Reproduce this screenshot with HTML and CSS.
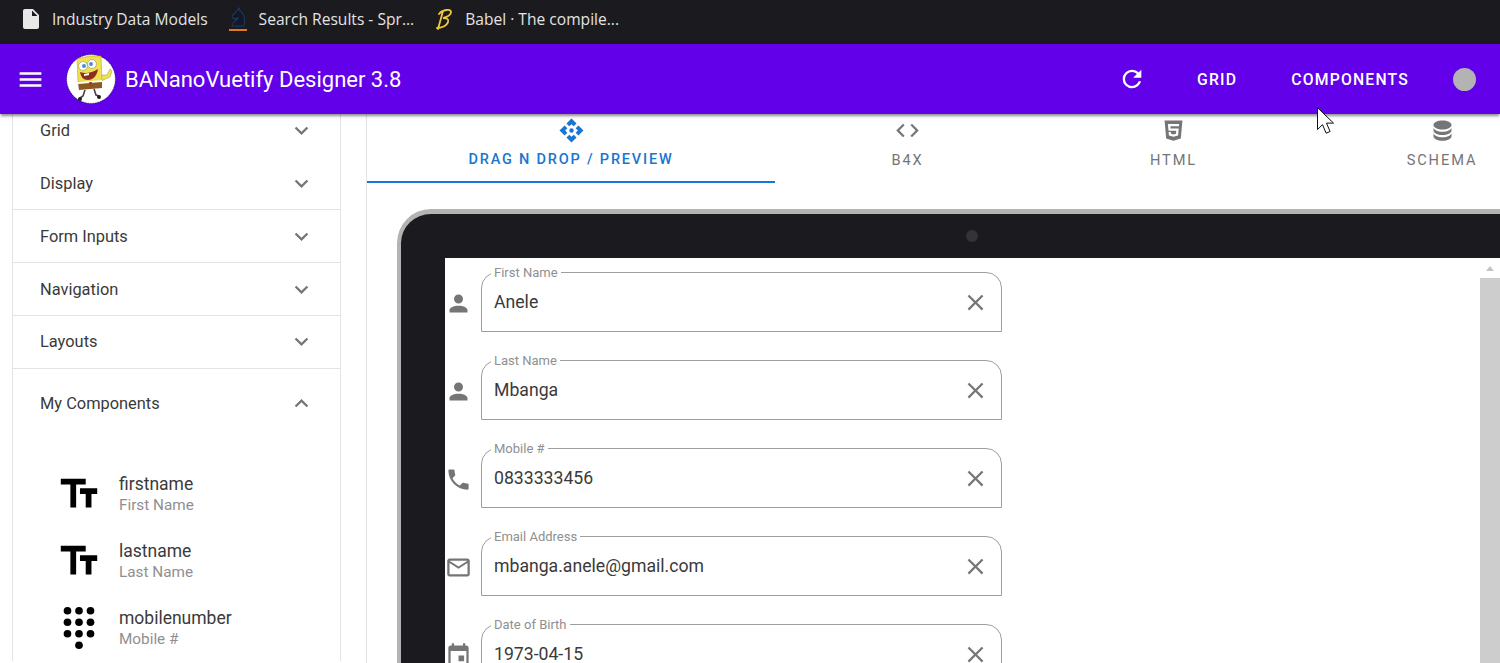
FILE: index.html
```html
<!DOCTYPE html>
<html lang="en">
<head>
<meta charset="utf-8">
<title>BANanoVuetify Designer 3.8</title>
<link rel="stylesheet" href="styles.css">
</head>
<body>
<nav class="bookmarks">
  <a class="bookmark bm-first"><svg class="bm-icon file-icon" viewBox="0 0 24 24"><path d="M13,9V3.5L18.5,9M6,2C4.89,2 4,2.89 4,4V20A2,2 0 0,0 6,22H18A2,2 0 0,0 20,20V8L14,2H6Z"/></svg>Industry Data Models</a>
  <a class="bookmark"><svg class="bm-icon" viewBox="0 0 24 24"><path d="M6 19c0-4 5-5 6-8-2 1-4 1-5 0l-1-2 5-5 2-3 1 3c4 2 5 8 4 15z" fill="#10182a" stroke="#1d3a5e" stroke-width="1.1"/><path d="M3 23h18" stroke="#e07a1a" stroke-width="2"/></svg>Search Results - Spr...</a>
  <a class="bookmark"><svg class="bm-icon" viewBox="0 0 24 24"><path d="M7 7c3-4 12-6 12-2 0 3-4 5-8 6 4 0 6 1 5 4-1 4-7 6-11 6M11 4L6 22" fill="none" stroke="#f0c93a" stroke-width="1.8" stroke-linecap="round"/></svg>Babel · The compile...</a>
</nav>

<header class="appbar">
  <svg class="menu-icon" viewBox="0 0 24 24"><path d="M3,6H21V8H3V6M3,11H21V13H3V11M3,16H21V18H3V16Z"/></svg>
  <svg class="logo" viewBox="0 0 50 50">
    <circle cx="25" cy="25" r="24.4" fill="#fff" stroke="#222" stroke-width="0.6" stroke-dasharray="1.5 1"/>
    <path d="M35 21l6 0 3-6 2 2-2 6-9 4z" fill="#f2e24e" stroke="#8a7a20" stroke-width=".4"/>
    <path d="M11 5l12-3 12 0 1 25-24 1z" fill="#f0e050" stroke="#a89a30" stroke-width=".5"/>
    <path d="M12 29l24-2 0 7-23 2z" fill="#8a5a20"/>
    <path d="M12 28l24-2 0 2-24 2z" fill="#fff"/>
    <path d="M23 28l3 0-1 5z" fill="#c0282a"/>
    <circle cx="17" cy="12" r="4.4" fill="#fff" stroke="#666" stroke-width=".4"/>
    <circle cx="26" cy="10" r="4.4" fill="#fff" stroke="#666" stroke-width=".4"/>
    <circle cx="18" cy="12" r="2" fill="#4a90d0"/>
    <circle cx="25" cy="10" r="2" fill="#4a90d0"/>
    <path d="M14 18c5 2 12 1 18-3-1 7-5 11-10 11-5 0-7-3-8-8z" fill="#8a2f22"/>
    <path d="M18 20l5-1 0 2-5 1z" fill="#fff"/>
    <path d="M19 36l-2 6-3 2M28 35l2 6 3 1" fill="none" stroke="#444" stroke-width="1.6"/>
    <circle cx="14" cy="45" r="2" fill="#222"/><circle cx="33" cy="43" r="2" fill="#222"/>
  </svg>
  <h1 class="title">BANanoVuetify Designer 3.8</h1>
  <div class="spacer"></div>
  <svg class="refresh-icon" viewBox="0 0 24 24"><path d="M17.65,6.35C16.2,4.9 14.21,4 12,4A8,8 0 0,0 4,12A8,8 0 0,0 12,20C15.73,20 18.84,17.45 19.73,14H17.65C16.83,16.33 14.61,18 12,18A6,6 0 0,1 6,12A6,6 0 0,1 12,6C13.66,6 15.14,6.69 16.22,7.78L13,11H20V4L17.65,6.35Z"/></svg>
  <a class="bar-btn btn-grid">GRID</a>
  <a class="bar-btn btn-comp">COMPONENTS</a>
  <span class="user-dot"></span>
</header>

<main class="main">
  <aside class="side">
    <div class="panel">
      <div class="acc-row acc-first"><span>Grid</span><svg class="chev" viewBox="0 0 24 24"><path d="M7.41,8.58L12,13.17L16.59,8.58L18,10L12,16L6,10L7.41,8.58Z"/></svg></div>
      <div class="acc-row acc-plain"><span>Display</span><svg class="chev" viewBox="0 0 24 24"><path d="M7.41,8.58L12,13.17L16.59,8.58L18,10L12,16L6,10L7.41,8.58Z"/></svg></div>
      <div class="acc-row"><span>Form Inputs</span><svg class="chev" viewBox="0 0 24 24"><path d="M7.41,8.58L12,13.17L16.59,8.58L18,10L12,16L6,10L7.41,8.58Z"/></svg></div>
      <div class="acc-row"><span>Navigation</span><svg class="chev" viewBox="0 0 24 24"><path d="M7.41,8.58L12,13.17L16.59,8.58L18,10L12,16L6,10L7.41,8.58Z"/></svg></div>
      <div class="acc-row"><span>Layouts</span><svg class="chev" viewBox="0 0 24 24"><path d="M7.41,8.58L12,13.17L16.59,8.58L18,10L12,16L6,10L7.41,8.58Z"/></svg></div>
      <div class="acc-row acc-open"><span>My Components</span><svg class="chev" viewBox="0 0 24 24"><path d="M7.41,15.41L12,10.83L16.59,15.41L18,14L12,8L6,14L7.41,15.41Z"/></svg></div>
      <ul class="comp-list">
        <li class="comp-item"><svg class="comp-icon" viewBox="0 0 24 24"><path d="M2.5 4v3h5v12h3V7h5V4h-13zm19 5h-9v3h3v7h3v-7h3V9z"/></svg><div><div class="comp-name">firstname</div><div class="comp-sub">First Name</div></div></li>
        <li class="comp-item"><svg class="comp-icon" viewBox="0 0 24 24"><path d="M2.5 4v3h5v12h3V7h5V4h-13zm19 5h-9v3h3v7h3v-7h3V9z"/></svg><div><div class="comp-name">lastname</div><div class="comp-sub">Last Name</div></div></li>
        <li class="comp-item"><svg class="comp-icon" viewBox="0 0 24 24"><circle cx="6" cy="3" r="2"/><circle cx="12" cy="3" r="2"/><circle cx="18" cy="3" r="2"/><circle cx="6" cy="9" r="2"/><circle cx="12" cy="9" r="2"/><circle cx="18" cy="9" r="2"/><circle cx="6" cy="15" r="2"/><circle cx="12" cy="15" r="2"/><circle cx="18" cy="15" r="2"/><circle cx="12" cy="21" r="2"/></svg><div><div class="comp-name">mobilenumber</div><div class="comp-sub">Mobile #</div></div></li>
      </ul>
    </div>
  </aside>

  <section class="content">
    <div class="tabs">
      <div class="tab tab-active tab-a"><svg class="tab-icon" viewBox="0 0 24 24"><path d="M22.67,12L18.18,16.5L15.67,14L17.65,12L15.67,10.04L18.18,7.53L22.67,12M12,1.33L16.47,5.82L13.96,8.33L12,6.35L10,8.33L7.5,5.82L12,1.33M12,22.67L7.53,18.18L10.04,15.67L12,17.65L14,15.67L16.5,18.18L12,22.67M1.33,12L5.82,7.5L8.33,10L6.35,12L8.33,13.96L5.82,16.47L1.33,12M12,10A2,2 0 0,1 14,12A2,2 0 0,1 12,14A2,2 0 0,1 10,12A2,2 0 0,1 12,10Z"/></svg><span>DRAG N DROP / PREVIEW</span></div>
      <div class="tab tab-b"><svg class="tab-icon" viewBox="0 0 24 24"><path d="M14.6,16.6L19.2,12L14.6,7.4L16,6L22,12L16,18L14.6,16.6M9.4,16.6L4.8,12L9.4,7.4L8,6L2,12L8,18L9.4,16.6Z"/></svg><span>B4X</span></div>
      <div class="tab tab-c"><svg class="tab-icon" viewBox="0 0 24 24"><path d="M12,17.56L16.07,16.43L16.62,10.33H9.38L9.2,8.3H16.8L17,6.31H7L7.56,12.32H14.45L14.22,14.9L12,15.5L9.78,14.9L9.64,13.24H7.64L7.93,16.43L12,17.56M4.07,3H19.93L18.5,19.2L12,21L5.5,19.2L4.07,3Z"/></svg><span>HTML</span></div>
      <div class="tab tab-d"><svg class="tab-icon" viewBox="0 0 24 24"><path d="M12,3C7.58,3 4,4.79 4,7C4,9.21 7.58,11 12,11C16.42,11 20,9.21 20,7C20,4.79 16.42,3 12,3M4,9V12C4,14.21 7.58,16 12,16C16.42,16 20,14.21 20,12V9C20,11.21 16.42,13 12,13C7.58,13 4,11.21 4,9M4,14V17C4,19.21 7.58,21 12,21C16.42,21 20,19.21 20,17V14C20,16.21 16.42,18 12,18C7.58,18 4,16.21 4,14Z"/></svg><span>SCHEMA</span></div>
    </div>

    <div class="device">
      <div class="bezel-top"><span class="camera"></span></div>
      <div class="screen">
        <form class="form">
          <div class="row"><svg class="row-icon" viewBox="0 0 24 24"><path d="M12,4A4,4 0 0,1 16,8A4,4 0 0,1 12,12A4,4 0 0,1 8,8A4,4 0 0,1 12,4M12,14C16.42,14 20,15.79 20,18V20H4V18C4,15.79 7.58,14 12,14Z"/></svg>
            <fieldset class="field"><legend>First Name</legend><span class="value">Anele</span><svg class="clear" viewBox="0 0 24 24"><path d="M19,6.41L17.59,5L12,10.59L6.41,5L5,6.41L10.59,12L5,17.59L6.41,19L12,13.41L17.59,19L19,17.59L13.41,12L19,6.41Z"/></svg></fieldset></div>
          <div class="row"><svg class="row-icon" viewBox="0 0 24 24"><path d="M12,4A4,4 0 0,1 16,8A4,4 0 0,1 12,12A4,4 0 0,1 8,8A4,4 0 0,1 12,4M12,14C16.42,14 20,15.79 20,18V20H4V18C4,15.79 7.58,14 12,14Z"/></svg>
            <fieldset class="field"><legend>Last Name</legend><span class="value">Mbanga</span><svg class="clear" viewBox="0 0 24 24"><path d="M19,6.41L17.59,5L12,10.59L6.41,5L5,6.41L10.59,12L5,17.59L6.41,19L12,13.41L17.59,19L19,17.59L13.41,12L19,6.41Z"/></svg></fieldset></div>
          <div class="row"><svg class="row-icon" viewBox="0 0 24 24"><path d="M6.62,10.79C8.06,13.62 10.38,15.94 13.21,17.38L15.41,15.18C15.69,14.9 16.08,14.82 16.43,14.93C17.55,15.3 18.75,15.5 20,15.5A1,1 0 0,1 21,16.5V20A1,1 0 0,1 20,21A17,17 0 0,1 3,4A1,1 0 0,1 4,3H7.5A1,1 0 0,1 8.5,4C8.5,5.25 8.7,6.45 9.07,7.57C9.18,7.92 9.1,8.31 8.82,8.59L6.62,10.79Z"/></svg>
            <fieldset class="field"><legend>Mobile #</legend><span class="value">0833333456</span><svg class="clear" viewBox="0 0 24 24"><path d="M19,6.41L17.59,5L12,10.59L6.41,5L5,6.41L10.59,12L5,17.59L6.41,19L12,13.41L17.59,19L19,17.59L13.41,12L19,6.41Z"/></svg></fieldset></div>
          <div class="row"><svg class="row-icon" viewBox="0 0 24 24"><path d="M22 6C22 4.9 21.1 4 20 4H4C2.9 4 2 4.9 2 6V18C2 19.1 2.9 20 4 20H20C21.1 20 22 19.1 22 18V6M20 6L12 11L4 6H20M20 18H4V8L12 13L20 8V18Z"/></svg>
            <fieldset class="field"><legend>Email Address</legend><span class="value">mbanga.anele@gmail.com</span><svg class="clear" viewBox="0 0 24 24"><path d="M19,6.41L17.59,5L12,10.59L6.41,5L5,6.41L10.59,12L5,17.59L6.41,19L12,13.41L17.59,19L19,17.59L13.41,12L19,6.41Z"/></svg></fieldset></div>
          <div class="row"><svg class="row-icon" viewBox="0 0 24 24"><path d="M19,19H5V8H19M16,1V3H8V1H6V3H5C3.89,3 3,3.89 3,5V19A2,2 0 0,0 5,21H19A2,2 0 0,0 21,19V5C21,3.89 20.1,3 19,3H18V1M17,12H12V17H17V12Z"/></svg>
            <fieldset class="field"><legend>Date of Birth</legend><span class="value">1973-04-15</span><svg class="clear" viewBox="0 0 24 24"><path d="M19,6.41L17.59,5L12,10.59L6.41,5L5,6.41L10.59,12L5,17.59L6.41,19L12,13.41L17.59,19L19,17.59L13.41,12L19,6.41Z"/></svg></fieldset></div>
        </form>
        <div class="scrollbar"><span class="scroll-up"></span><span class="scroll-thumb"></span></div>
      </div>
    </div>
  </section>
</main>

<svg class="cursor" viewBox="0 0 17 27"><path d="M.5.7V22.6l5-5 3.6 8.6 4-1.7-3.6-8.4h7z" fill="#fff" stroke="#111" stroke-width="1"/></svg>
</body>
</html>
```
FILE: styles.css
```css
* { box-sizing: border-box; }
html, body { margin: 0; height: 663px; overflow: hidden; }
body { font-family: Roboto, "Liberation Sans", sans-serif; background: #fff; color: #2b2b2b; display: flex; flex-direction: column; }
svg { display: block; flex: none; fill: currentColor; }

.bookmarks { height: 44px; flex: none; background: #1a1a1f; display: flex; align-items: center; padding: 0 0 6px 19px; color: #e3e3e3; font-family: "Open Sans", sans-serif; font-size: 15.6px; }
.bookmark { display: flex; align-items: center; margin-right: 18px; white-space: nowrap; }
.bm-icon { width: 24px; height: 24px; margin-right: 9px; }
.file-icon { color: #e8e8e8; }

.appbar { height: 70px; flex: none; background: #6200ea; color: #fff; display: flex; align-items: center; padding-left: 16px; box-shadow: 0 3px 2px -1px rgba(0,0,0,.3), 0 2px 4px rgba(0,0,0,.18); position: relative; z-index: 2; }
.menu-icon { width: 29px; height: 29px; }
.logo { width: 50px; height: 50px; margin-left: 21px; }
.title { margin: 0 0 0 9px; font-size: 22px; font-weight: 400; white-space: nowrap; }
.spacer { flex: 1; }
.refresh-icon { width: 28px; height: 28px; }
.bar-btn { font-size: 15.75px; font-weight: 500; letter-spacing: 1.2px; }
.btn-grid { margin-left: 51px; }
.btn-comp { margin-left: 54px; }
.user-dot { width: 23px; height: 23px; border-radius: 50%; background: #b3b3b3; margin: 0 24px 0 44px; }

.main { flex: 1; min-height: 0; display: flex; overflow: hidden; }
.side { width: 366px; flex: none; padding-left: 12px; }
.panel { width: 329px; margin-top: -10px; border: 1px solid #e3e3e3; border-width: 0 1px; }
.acc-row { height: 53px; display: flex; align-items: center; justify-content: space-between; padding: 0 27px; border-top: 1px solid #e3e3e3; font-size: 16.4px; color: #3a3a3a; }
.acc-first { border-top: 0; }
.acc-plain { border-top: 0; height: 52px; padding-top: 1px; }
.acc-row:nth-child(5) { padding-bottom: 2px; }
.acc-open { height: 68px; padding-top: 1px; }
.chev { width: 27px; height: 27px; margin-right: -2px; color: #757575; }
.comp-list { list-style: none; margin: 0; padding: 24px 0 0; }
.comp-item { height: 67px; display: flex; align-items: center; padding-left: 43px; }
.comp-icon { width: 46px; height: 46px; color: #000; margin-right: 17px; }
.comp-name { font-size: 17.5px; line-height: 22px; color: #3a3a3a; }
.comp-sub { font-size: 15.3px; line-height: 20px; color: #8f8f8f; }

.content { flex: 1; min-width: 0; border-left: 1px solid #e3e3e3; overflow: hidden; }
.tabs { display: flex; height: 69px; }
.tab { flex: none; display: flex; flex-direction: column; align-items: center; padding-top: 3px; font-size: 14.6px; font-weight: 400; letter-spacing: 1.9px; color: #757575; }
.tab span { margin-top: 6px; line-height: 20px; white-space: nowrap; }
.tab-icon { width: 27px; height: 27px; }
.tab-a { width: 408px; }
.tab-b { width: 265px; }
.tab-c { width: 267px; }
.tab-d { width: 270px; }
.tab-active { color: #1976d2; font-size: 14.5px; font-weight: 500; letter-spacing: 1.8px; border-bottom: 2px solid #1976d2; }

.device { width: 1151px; margin: 26px 0 0 30px; background: #1a1a1f; border: solid #b3b3b3; border-width: 5px 4px; border-radius: 34px; padding: 0 44px; }
.bezel-top { height: 44px; display: flex; align-items: center; justify-content: center; }
.camera { width: 12px; height: 12px; border-radius: 50%; background: #33333a; margin-right: 1px; }
.screen { background: #fff; display: flex; height: 500px; }
.form { flex: 1; padding-top: 8px; }
.row { display: flex; margin-bottom: 22px; height: 66px; }
.row-icon { width: 27px; height: 27px; color: #757575; margin-top: 24px; }
.field { width: 521px; height: 66px; margin: 0 0 0 9px; padding: 0 12px 6px 12px; border: 1px solid #9e9e9e; border-radius: 16px 16px 0 0; display: flex; align-items: center; justify-content: space-between; min-width: 0; }
.field legend { font-size: 13px; line-height: 13px; padding: 0 3px; margin-left: -3px; color: #8f8f8f; }
.value { font-size: 17.65px; color: #3a3a3a; }
.clear { width: 27px; height: 27px; color: #757575; }
.scrollbar { width: 20px; flex: none; display: flex; flex-direction: column; align-items: center; }
.scroll-up { height: 5px; flex: none; width: 8px; margin-top: 8px; border: solid transparent; border-width: 0 4px 5px; border-bottom-color: #c4c4c4; }
.scroll-thumb { display: block; width: 20px; flex: 1; margin-top: 7px; background: #cdcdcd; }

.cursor { position: absolute; left: 1317px; top: 107px; width: 17px; height: 27px; z-index: 3; }
```
